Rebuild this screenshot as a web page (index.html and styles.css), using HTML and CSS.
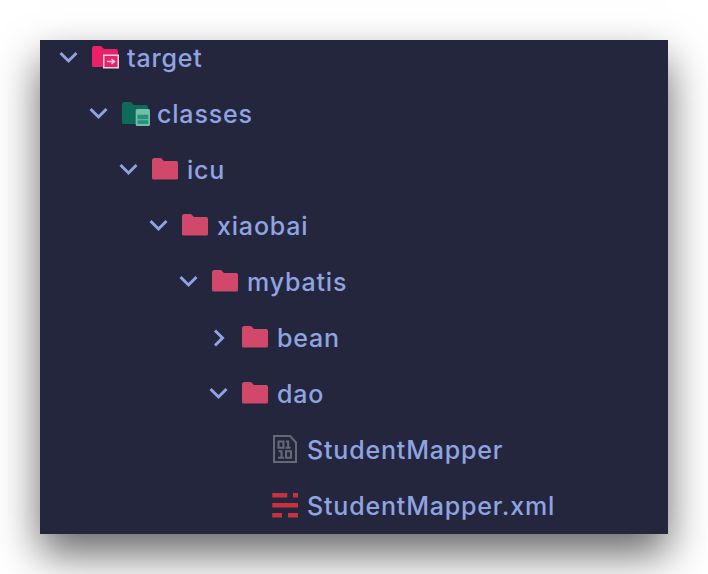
FILE: index.html
```html
<!DOCTYPE html>
<html lang="en">
<head>
<meta charset="utf-8">
<title>Project tree</title>
<link rel="stylesheet" href="styles.css">
</head>
<body>
<main class="panel">
  <ul class="tree">
    <li class="row d0">
      <svg class="chev" viewBox="0 0 20 20"><path d="M2.500 5l8 8 8-8"/></svg>
      <svg class="icon" viewBox="0 0 28 24"><path class="f-target" d="M1 2.500A2.500 2.500 0 0 1 3.500 0h6.500l3 3h12.500A2 2 0 0 1 27 5V19.500a1.500 1.500 0 0 1-1.500 1.500h-23A1.500 1.500 0 0 1 1 19.500z"/><path class="o-target" d="M12.750 9.250h14.500v12.500h-14.500zM16 15.500h7M20.500 13l3 2.500-3 2.500"/></svg>
      <span>target</span>
    </li>
    <li class="row d1">
      <svg class="chev" viewBox="0 0 20 20"><path d="M2.500 5l8 8 8-8"/></svg>
      <svg class="icon" viewBox="0 0 28 24"><path class="f-green" d="M1 2.500A2.500 2.500 0 0 1 3.500 0h6.500l3 3h12.500A2 2 0 0 1 27 5V20.500a1.500 1.500 0 0 1-1.500 1.500h-23A1.500 1.500 0 0 1 1 20.500z"/><rect class="b-green" x="14.700" y="7" width="14.300" height="17" rx="1.500"/><path class="l-green" d="M16.500 12.700h10.700v4.600H16.500zM16.500 18.300h10.700v3.700H16.500z"/></svg>
      <span>classes</span>
    </li>
    <li class="row d2">
      <svg class="chev" viewBox="0 0 20 20"><path d="M2.500 5l8 8 8-8"/></svg>
      <svg class="icon" viewBox="0 0 28 24"><use href="#folder"/></svg>
      <span>icu</span>
    </li>
    <li class="row d3">
      <svg class="chev" viewBox="0 0 20 20"><path d="M2.500 5l8 8 8-8"/></svg>
      <svg class="icon" viewBox="0 0 28 24"><use href="#folder"/></svg>
      <span>xiaobai</span>
    </li>
    <li class="row d4">
      <svg class="chev" viewBox="0 0 20 20"><path d="M2.500 5l8 8 8-8"/></svg>
      <svg class="icon" viewBox="0 0 28 24"><use href="#folder"/></svg>
      <span>mybatis</span>
    </li>
    <li class="row d5">
      <svg class="chev" viewBox="0 0 20 20"><path d="M7 2.500l7.500 7.500-7.500 7.500"/></svg>
      <svg class="icon" viewBox="0 0 28 24"><use href="#folder"/></svg>
      <span>bean</span>
    </li>
    <li class="row d5">
      <svg class="chev" viewBox="0 0 20 20"><path d="M2.500 5l8 8 8-8"/></svg>
      <svg class="icon" viewBox="0 0 28 24"><use href="#folder"/></svg>
      <span>dao</span>
    </li>
    <li class="row d6">
      <span class="chev"></span>
      <svg class="icon" viewBox="0 0 28 28"><path class="o-file" d="M3 0h16l6 6.500V26H3z"/><path class="o-bin" d="M7.500 5.500h5v6.200h-5zM14.800 5.500h2.400v6.200M14.500 11.700h5.200M7.500 15.300h3v6.500M7 21.800h6M15 15.300h5v6.500h-5z"/></svg>
      <span>StudentMapper</span>
    </li>
    <li class="row d6">
      <span class="chev"></span>
      <svg class="icon" viewBox="0 0 28 28"><path class="xml" d="M1.300 1h15v4.400h-15zM22 1h5v4.400h-5zM1.300 11h25.700v4.500H1.300zM1.300 21h9.700v4.500H1.300zM17 21h10v4.500H17z"/></svg>
      <span>StudentMapper.xml</span>
    </li>
  </ul>
  <svg class="defs" aria-hidden="true"><defs><path id="folder" class="f-red" d="M1 2.500A2.500 2.500 0 0 1 3.500 0h6.500l3 3h12.500A2 2 0 0 1 27 5V20a1.500 1.500 0 0 1-1.500 1.500h-23A1.500 1.500 0 0 1 1 20z"/></defs></svg>
</main>
</body>
</html>
```

FILE: styles.css
```css
* { box-sizing: border-box; }
html, body { margin: 0; background: #fff; }
body { width: 708px; height: 574px; padding: 40px 40px 0; overflow: hidden; }
.panel {
  width: 628px;
  height: 494px;
  background: #23263c;
  overflow: hidden;
  box-shadow: 0 20px 40px rgba(0, 0, 0, 0.6);
  font-family: Inter, "Liberation Sans", sans-serif;
  font-size: 25px;
  font-weight: 450;
  letter-spacing: 0.82px;
  color: #90a3e3;
}
.tree { list-style: none; margin: -10px 0 0; padding: 0; }
.row { height: 56px; display: flex; align-items: center; }
.d0 { padding-left: 18px; }
.d1 { padding-left: 48px; }
.d2 { padding-left: 78px; }
.d3 { padding-left: 108px; }
.d4 { padding-left: 138px; }
.d5 { padding-left: 168px; }
.d6 { padding-left: 198px; }
.chev { width: 20px; height: 20px; flex: none; margin-right: 13px; }
.chev path { fill: none; stroke: #8fa2e2; stroke-width: 3; }
.icon { width: 28px; height: 28px; flex: none; margin-right: 8px; overflow: visible; }
.defs { position: absolute; width: 0; height: 0; }
.f-red { fill: #d1486a; }
.f-target { fill: #ea2167; }
.o-target { fill: none; stroke: #fbd0e0; stroke-width: 1.5; }
.f-green { fill: #0e6b5a; }
.b-green { fill: #6fbfa9; }
.l-green { fill: #2a8f7c; }
.o-file { fill: none; stroke: #646a74; stroke-width: 2; }
.o-bin { fill: none; stroke: #646a74; stroke-width: 2; }
.xml { fill: #c8323c; }
```
